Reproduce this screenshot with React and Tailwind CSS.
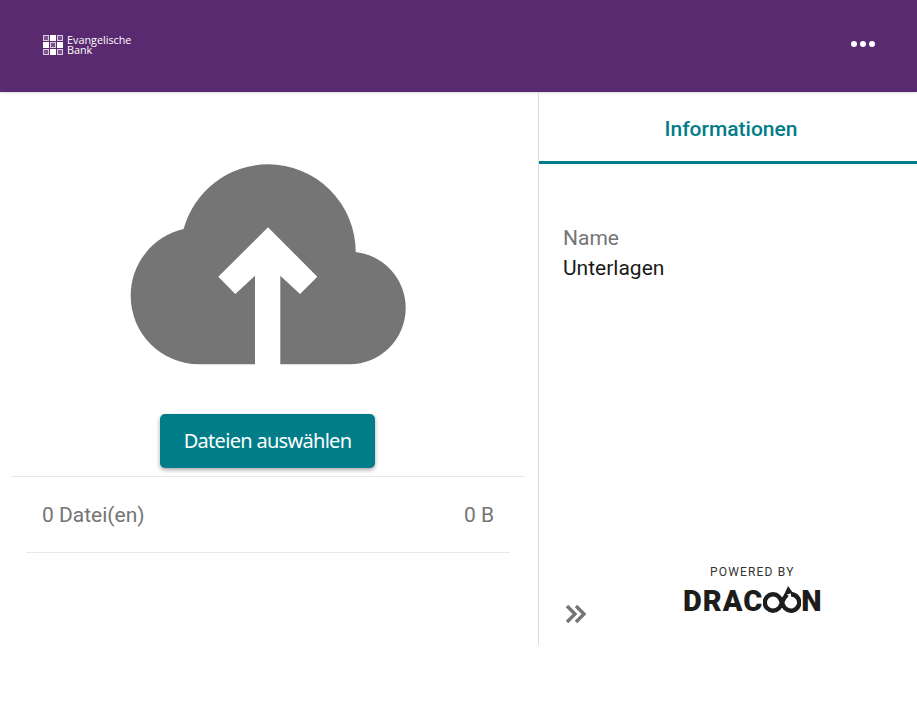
import React from 'react';

const sans = 'font-["Roboto",sans-serif]';

// bank logo mark, 3x3 checker
function BankMark() {
    const cells = [
        'border', 'fill', 'border',
        'fill', 'border', 'fill',
        'border', 'fill', 'border',
    ];
    return (
        <div className="grid grid-cols-3 gap-px w-[20px] h-[20px]">
            {cells.map((cell, i) => (
                <div key={i} className={cell === 'fill' ? 'bg-white' : 'border border-[#d9cbe0] bg-white/20'} />
            ))}
        </div>
    );
}

function CloudUpload() {
    return (
        <svg width="278" height="203" viewBox="129 163 278 203">
            <path
                fill="#757575"
                d="M183.6 229A87.7 87.7 0 0 1 268 164.3A87.7 87.7 0 0 1 355.7 252A56.2 56.2 0 0 1 405.7 308A56.2 56.2 0 0 1 349.5 364.3H280.3V275.7L300 294L317.3 276.7L268 227.3L218.3 276.7L235.3 294L255 275.7V364.3H199A68.3 68.3 0 0 1 130.7 296A68.3 68.3 0 0 1 183.6 229Z"
            />
        </svg>
    );
}

function DoubleChevron() {
    return (
        <svg width="22" height="20" viewBox="0 0 22 20" fill="none" stroke="#757575" strokeWidth="3.4">
            <path d="M2 2l8 8-8 8" />
            <path d="M11 2l8 8-8 8" />
        </svg>
    );
}

function DracoonLogo() {
    return (
        <div className="flex items-end h-[28px] font-['Roboto',sans-serif] font-black text-[29px] leading-[26px] text-[#1d1d1b]">
            <span className="tracking-[1px]">DRAC</span>
            <svg width="38" height="28" viewBox="0 0 38 28" fill="none" stroke="#1d1d1b" strokeWidth="4.4">
                <path d="M28 8.300A8.200 8.200 0 1 1 22.200 22.300C19 19.500 19 14 15.800 10.700A8.200 8.200 0 1 0 15.800 22.300C19 19.500 19 14 22.200 10.700L24 8.500" />
                <path d="M25 0l5 7-9 2z" fill="#1d1d1b" stroke="none" />
            </svg>
            <span>N</span>
        </div>
    );
}

export default function App() {
    return (
        <div className={`${sans} min-h-[708px] bg-white`}>
            <header className="flex items-center justify-between h-[92px] bg-[#5a2a70] pl-[43px] pr-[42px] shadow-sm">
                <div className="flex items-center gap-[4px] pb-[2px]">
                    <BankMark />
                    <div className="font-['Open_Sans',sans-serif] text-[10.8px] leading-[10px] text-white">
                        <div>Evangelische</div>
                        <div>Bank</div>
                    </div>
                </div>
                <div className="flex gap-[3px] pb-[4px]">
                    <span className="w-[6px] h-[6px] rounded-full bg-white" />
                    <span className="w-[6px] h-[6px] rounded-full bg-white" />
                    <span className="w-[6px] h-[6px] rounded-full bg-white" />
                </div>
            </header>

            <main className="flex h-[553px]">
                <section className="w-[538px] flex flex-col items-center pt-[71px] pr-[2px]">
                    <CloudUpload />
                    <button className="mt-[48px] -ml-[1px] w-[215px] h-[54px] rounded-[5px] bg-[#007d88] text-white text-[20px] font-['Noto_Sans',sans-serif] tracking-[-0.7px] shadow-[0_2px_4px_rgba(0,0,0,0.35)]">
                        Dateien auswählen
                    </button>
                    <div className="mt-[8px] w-[514px] border-t border-[#e8e8e8]" />
                    <div className="w-[484px] h-[76px] flex items-center justify-between px-[16px] pt-[2px] border-b border-[#e8e8e8] text-[21px] text-[#757575]">
                        <span>0 Datei(en)</span>
                        <span>0 B</span>
                    </div>
                </section>

                <aside className="flex-1 flex flex-col border-l border-[#dcdcdc]">
                    <div className="h-[72px] flex items-center justify-center border-b-[3px] border-[#007d88] text-[21px] font-medium text-[#007d88] pt-[6px] pl-[6px]">
                        Informationen
                    </div>
                    <div className="flex-1 flex flex-col px-[24px] pt-[59px] text-[21px] leading-[30px]">
                        <div className="text-[#757575]">Name</div>
                        <div className="text-[#1a1a1a]">Unterlagen</div>
                        <div className="mt-auto flex items-end pb-[20px]">
                            <div className="ml-[2px] mb-[1px]">
                                <DoubleChevron />
                            </div>
                            <div className="ml-[96px] mb-[11px] flex flex-col items-center">
                                <div className="text-[12px] leading-[14px] tracking-[1.2px] text-[#333333] mb-[7px]">POWERED BY</div>
                                <DracoonLogo />
                            </div>
                        </div>
                    </div>
                </aside>
            </main>
        </div>
    );
}
